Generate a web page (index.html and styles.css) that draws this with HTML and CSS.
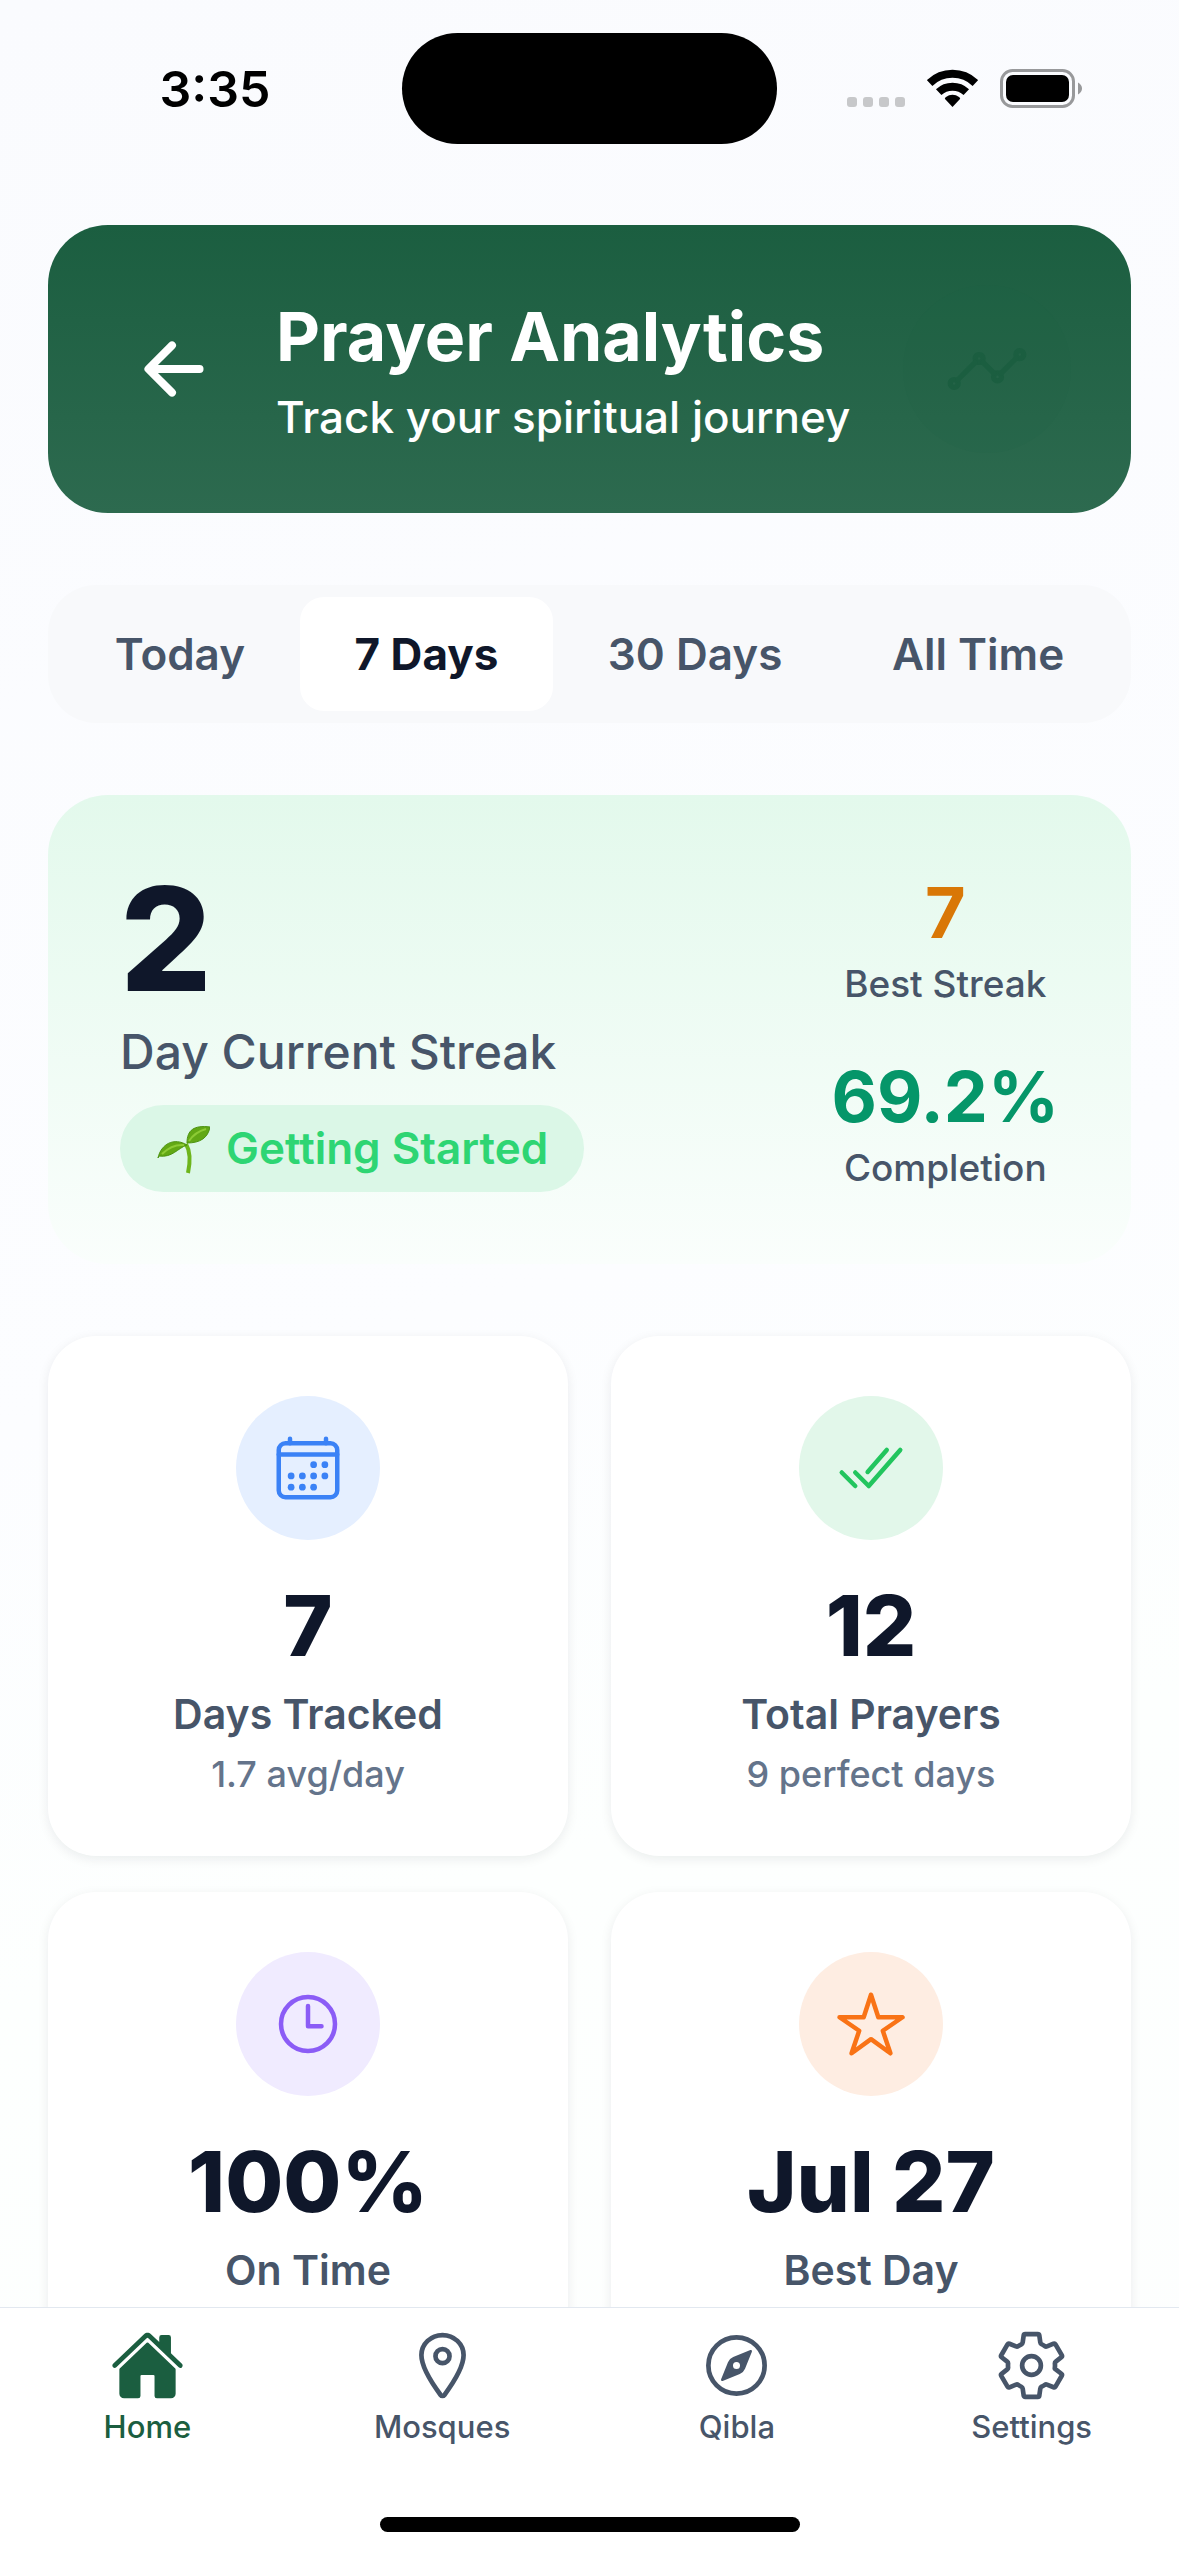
FILE: index.html
```html
<!DOCTYPE html>
<html lang="en">
<head>
  <meta charset="utf-8">
  <meta name="viewport" content="width=device-width, initial-scale=1">
  <title>Prayer Analytics</title>
  <link rel="stylesheet" href="styles.css">
</head>
<body class="app">
  <div class="status-bar">
    <time class="status-time">3:35</time>
    <div class="island"></div>
    <div class="status-icons">
      <svg class="signal" viewBox="0 0 58 39" aria-hidden="true">
        <rect x="0" y="28" width="10" height="10" rx="3"/>
        <rect x="16" y="28" width="10" height="10" rx="3"/>
        <rect x="32" y="28" width="10" height="10" rx="3"/>
        <rect x="48" y="28" width="10" height="10" rx="3"/>
      </svg>
      <svg class="wifi" viewBox="0 0 51 39" aria-hidden="true">
        <path class="wifi-arc" d="M2.6 14A33 33 0 0 1 48.4 14M11.7 23.1A20.3 20.3 0 0 1 39.3 23.1"/>
        <path d="M25.5 38L17.8 29.8Q18 28.8 19 28A11 11 0 0 1 32 28Q33 28.8 33.2 29.8Z"/>
      </svg>
      <svg class="battery" viewBox="0 0 82 39" aria-hidden="true">
        <rect class="battery-shell" x="1.5" y="1.5" width="72" height="36" rx="11"/>
        <rect x="6" y="6" width="63" height="27" rx="7"/>
        <path class="battery-cap" d="M78 13.5Q82 16 82 19.5T78 25.5Z"/>
      </svg>
    </div>
  </div>

  <main class="content">
    <header class="hero">
      <button class="back" type="button" aria-label="Back">
        <svg class="icon icon-lg icon-bold" viewBox="0 0 512 512"><path d="M244 400L100 256l144-144M120 256h292"/></svg>
      </button>
      <div class="hero-text">
        <h1 class="hero-title">Prayer Analytics</h1>
        <p class="hero-subtitle">Track your spiritual journey</p>
      </div>
      <div class="hero-badge">
        <svg class="icon icon-lg" viewBox="0 0 512 512" aria-hidden="true">
          <circle cx="456" cy="168" r="24"/><circle cx="320" cy="304" r="24"/><circle cx="208" cy="192" r="24"/><circle cx="56" cy="344" r="24"/>
          <path d="M344 280l88-88M232 216l64 64M80 320l104-104"/>
        </svg>
      </div>
    </header>

    <div class="tabs">
      <button class="tab" type="button">Today</button>
      <button class="tab tab-active" type="button" aria-pressed="true">7 Days</button>
      <button class="tab" type="button">30 Days</button>
      <button class="tab" type="button">All Time</button>
    </div>

    <section class="streak">
      <div class="streak-main">
        <div class="streak-count">2</div>
        <div class="streak-label">Day Current Streak</div>
        <div class="streak-pill">
          <svg class="seedling" viewBox="0 0 54 50" aria-hidden="true">
            <path class="stem" d="M30 20Q36 30 32 49"/>
            <path class="leaf" d="M2 34C5 20 18 13 31 21C22 24 16 34 3 32Z"/>
            <path class="leaf" d="M31 19C31 6 38 1 54 3C52 14 44 19 31 19Z"/>
            <path class="vein" d="M6 30Q16 20 28 21M33 17Q39 8 50 5"/>
          </svg>
          <span>Getting Started</span>
        </div>
      </div>
      <div class="streak-side">
        <div class="metric">
          <div class="metric-value metric-amber">7</div>
          <div class="metric-label">Best Streak</div>
        </div>
        <div class="metric">
          <div class="metric-value metric-green">69.2%</div>
          <div class="metric-label">Completion</div>
        </div>
      </div>
    </section>

    <section class="stats">
      <article class="card">
        <div class="bubble bubble-blue">
          <svg class="icon" viewBox="0 0 512 512" aria-hidden="true">
            <rect x="48" y="80" width="416" height="384" rx="48"/>
            <path d="M128 48v32M384 48v32M464 160H48"/>
            <g class="solid"><circle cx="296" cy="232" r="24"/><circle cx="376" cy="232" r="24"/><circle cx="296" cy="312" r="24"/><circle cx="376" cy="312" r="24"/><circle cx="136" cy="312" r="24"/><circle cx="216" cy="312" r="24"/><circle cx="136" cy="392" r="24"/><circle cx="216" cy="392" r="24"/><circle cx="296" cy="392" r="24"/></g>
          </svg>
        </div>
        <div class="card-value">7</div>
        <div class="card-label">Days Tracked</div>
        <div class="card-note">1.7 avg/day</div>
      </article>
      <article class="card">
        <div class="bubble bubble-green">
          <svg class="icon" viewBox="0 0 512 512" aria-hidden="true"><path d="M464 128L240 384l-96-96M144 384l-96-96M368 128L232 284"/></svg>
        </div>
        <div class="card-value">12</div>
        <div class="card-label">Total Prayers</div>
        <div class="card-note">9 perfect days</div>
      </article>
      <article class="card">
        <div class="bubble bubble-purple">
          <svg class="icon" viewBox="0 0 512 512" aria-hidden="true"><circle cx="256" cy="256" r="192"/><path d="M256 128v144h96"/></svg>
        </div>
        <div class="card-value">100%</div>
        <div class="card-label">On Time</div>
      </article>
      <article class="card">
        <div class="bubble bubble-orange">
          <svg class="icon" viewBox="0 0 512 512" aria-hidden="true"><path d="M480 208H308L256 48l-52 160H32l140 96-54 160 138-100 138 100-54-160z"/></svg>
        </div>
        <div class="card-value">Jul 27</div>
        <div class="card-label">Best Day</div>
      </article>
    </section>
  </main>

  <footer class="dock">
    <nav class="nav">
      <a class="nav-item nav-active" href="#home" aria-current="page">
        <svg class="icon nav-icon" viewBox="0 0 512 512" aria-hidden="true"><g class="solid"><path d="M261.56 101.28a8 8 0 00-11.06 0L66.4 277.15a8 8 0 00-2.47 5.79L63.9 448a32 32 0 0032 32H192a16 16 0 0016-16V328a8 8 0 018-8h80a8 8 0 018 8v136a16 16 0 0016 16h96.06a32 32 0 0032-32V282.94a8 8 0 00-2.47-5.79z"/><path d="M490.91 244.15l-74.8-71.56V64a16 16 0 00-16-16h-48a16 16 0 00-16 16v32l-57.92-55.38C272.77 35.14 264.71 32 256 32c-8.68 0-16.72 3.14-22.14 8.63l-212.7 203.5c-6.22 6-7 15.87-1.34 22.37A16 16 0 0043 267.56L250.5 69.28a8 8 0 0111.06 0l207.52 198.28a16 16 0 0022.59-.44c6.14-6.36 5.63-16.86-.76-22.97z"/></g></svg>
        <span>Home</span>
      </a>
      <a class="nav-item" href="#mosques">
        <svg class="icon nav-icon" viewBox="0 0 512 512" aria-hidden="true"><path d="M256 48c-79.5 0-144 61.39-144 137 0 87 96 224.87 131.25 272.49a15.77 15.77 0 0025.5 0C304 409.89 400 272.07 400 185c0-75.61-64.5-137-144-137z"/><circle cx="256" cy="192" r="48"/></svg>
        <span>Mosques</span>
      </a>
      <a class="nav-item" href="#qibla">
        <svg class="icon nav-icon" viewBox="0 0 512 512" aria-hidden="true"><circle cx="256" cy="256" r="192"/><path class="solid" d="M350.67 150.93l-117.2 46.88a64 64 0 00-35.66 35.66l-46.88 117.2a8 8 0 0010.4 10.4l117.2-46.88a64 64 0 0035.66-35.66l46.88-117.2a8 8 0 00-10.4-10.4zM256 280a24 24 0 1124-24 24 24 0 01-24 24z"/></svg>
        <span>Qibla</span>
      </a>
      <a class="nav-item" href="#settings">
        <svg class="icon nav-icon" viewBox="0 0 512 512" aria-hidden="true"><circle cx="256" cy="256" r="64"/><path d="M416.39 256a154.34 154.34 0 01-1.53 20.79l45.21 35.46a10.81 10.81 0 012.45 13.75l-42.77 74a10.81 10.81 0 01-13.14 4.59l-44.9-18.08a16.11 16.11 0 00-15.17 1.75A164.48 164.48 0 01325 400.8a15.94 15.94 0 00-8.82 12.14l-6.73 47.89a11.08 11.08 0 01-10.68 9.17h-85.54a11.11 11.11 0 01-10.69-8.87l-6.72-47.82a16.07 16.07 0 00-9-12.22 155.3 155.3 0 01-21.46-12.57 16 16 0 00-15.11-1.71l-44.89 18.07a10.81 10.81 0 01-13.14-4.58l-42.77-74a10.8 10.8 0 012.45-13.75l38.21-30a16.05 16.05 0 006-14.08c-.36-4.17-.58-8.33-.58-12.5s.21-8.27.58-12.35a16 16 0 00-6.07-13.94l-38.19-30A10.81 10.81 0 0149.48 186l42.77-74a10.81 10.81 0 0113.14-4.59l44.9 18.08a16.11 16.11 0 0015.17-1.75A164.48 164.48 0 01187 111.2a15.94 15.94 0 008.82-12.14l6.73-47.89A11.08 11.08 0 01213.23 42h85.54a11.11 11.11 0 0110.69 8.87l6.72 47.82a16.07 16.07 0 009 12.22 155.3 155.3 0 0121.46 12.57 16 16 0 0015.11 1.71l44.89-18.07a10.81 10.81 0 0113.14 4.58l42.77 74a10.8 10.8 0 01-2.45 13.75l-38.21 30a16.05 16.05 0 00-6.05 14.08c.33 4.14.55 8.3.55 12.47z"/></svg>
        <span>Settings</span>
      </a>
    </nav>
    <div class="home-indicator"></div>
  </footer>
</body>
</html>
```
FILE: styles.css
```css
:root {
  --ink: #0f172a;
  --slate: #475569;
  --muted: #64748b;
  --brand: #1b5e40;
}

* {
  box-sizing: border-box;
}

.app {
  display: flex;
  flex-direction: column;
  height: 100vh;
  margin: 0;
  background: linear-gradient(165deg, #fafbfe 0%, #fcfdff 50%, #fdfffe 70%, #fdfefe 100%);
  color: var(--ink);
  font-family: Inter, "Liberation Sans", sans-serif;
}

/* Status bar */

.status-bar {
  display: grid;
  grid-template-columns: 1fr 375px 1fr;
  align-items: center;
  justify-items: center;
  padding: 33px 28px;
}

.status-time {
  color: #000;
  font-size: 50px;
  font-weight: 600;
  line-height: 60px;
}

.island {
  width: 100%;
  height: 111px;
  border-radius: 56px;
  background: #000;
}

.status-icons {
  display: flex;
  gap: 22px;
}

.signal,
.wifi,
.battery {
  height: 39px;
}

.signal {
  width: 58px;
  fill: #c7c8ca;
}

.wifi {
  width: 51px;
}

.wifi-arc {
  fill: none;
  stroke: #000;
  stroke-width: 8;
}

.battery {
  width: 82px;
}

.battery-shell {
  fill: none;
  stroke: #98999b;
  stroke-width: 3;
}

.battery-cap {
  fill: #98999b;
}

/* Icons */

.icon {
  display: block;
  width: 72px;
  height: 72px;
  fill: none;
  stroke: currentColor;
  stroke-width: 32;
  stroke-linecap: round;
  stroke-linejoin: round;
}

.icon-lg {
  width: 84px;
  height: 84px;
}

.icon-bold {
  stroke-width: 48;
}

.icon .solid {
  fill: currentColor;
  stroke: none;
}

/* Scrolling content */

.content {
  display: flex;
  flex: 1;
  flex-direction: column;
  gap: 72px;
  min-height: 0;
  padding: 48px 48px 72px;
  overflow-y: auto;
  scrollbar-width: none;
}

.content > * {
  flex-shrink: 0;
}

.hero {
  display: flex;
  align-items: center;
  gap: 36px;
  padding: 60px;
  border-radius: 60px;
  background: linear-gradient(#1b5e40, #2d6a4f);
  color: #fff;
}

.back {
  display: grid;
  place-items: center;
  width: 132px;
  height: 132px;
  padding: 0;
  border: 0;
  background: none;
  color: inherit;
}

.hero-text {
  display: flex;
  flex: 1;
  flex-direction: column;
  gap: 12px;
}

.hero-title {
  margin: 0;
  font-size: 68px;
  font-weight: 700;
  line-height: 84px;
}

.hero-subtitle {
  margin: 0;
  font-size: 44px;
  font-weight: 500;
  line-height: 54px;
}

.hero-badge {
  display: grid;
  place-items: center;
  width: 168px;
  height: 168px;
  border-radius: 50%;
  background: rgb(27 94 64 / 10%);
  color: var(--brand);
}

.tabs {
  display: flex;
  padding: 12px;
  border-radius: 48px;
  background: #f8f9fb;
}

.tab {
  flex: 1 1 auto;
  height: 114px;
  padding: 0 36px;
  border: 0;
  border-radius: 24px;
  background: none;
  color: var(--slate);
  font: 600 44px/54px Inter, "Liberation Sans", sans-serif;
}

.tab-active {
  background: #fff;
  color: var(--ink);
  font-weight: 700;
}

/* Streak summary */

.streak {
  display: flex;
  align-items: center;
  justify-content: space-between;
  padding: 72px;
  border-radius: 60px;
  background: linear-gradient(#e3f9ec, #fafefc);
}

.streak-main {
  display: flex;
  flex-direction: column;
  align-items: flex-start;
}

.streak-count {
  font-size: 144px;
  font-weight: 800;
  line-height: 144px;
}

.streak-label {
  margin: 12px 0 24px;
  color: var(--slate);
  font-size: 48px;
  font-weight: 500;
  line-height: 58px;
}

.streak-pill {
  display: flex;
  align-items: center;
  gap: 16px;
  padding: 18px 36px;
  border-radius: 48px;
  background: #dbf7e7;
  color: #2ed573;
  font-size: 44px;
  font-weight: 600;
  line-height: 51px;
}

.seedling {
  width: 54px;
  height: 50px;
}

.leaf {
  fill: #62a815;
  stroke: #4c9310;
  stroke-width: 1;
}

.vein {
  fill: none;
  stroke: #8ccb35;
  stroke-width: 2;
}

.stem {
  fill: none;
  stroke: #6db51b;
  stroke-width: 4;
}

.streak-side {
  display: flex;
  flex-direction: column;
  gap: 48px;
  text-align: center;
}

.metric {
  display: flex;
  flex-direction: column;
  gap: 6px;
}

.metric-value {
  font-size: 70px;
  font-weight: 700;
  line-height: 86px;
}

.metric-amber {
  color: #d97706;
}

.metric-green {
  color: #059669;
}

.metric-label {
  color: var(--slate);
  font-size: 37px;
  font-weight: 500;
  line-height: 44px;
}

/* Stat cards */

.stats {
  display: grid;
  grid-template-columns: 1fr 1fr;
  grid-auto-rows: 1fr;
  gap: 36px 43px;
}

.card {
  display: flex;
  flex-direction: column;
  align-items: center;
  gap: 12px;
  padding: 60px;
  border-radius: 48px;
  background: #fff;
  box-shadow: 0 3px 12px rgb(15 23 42 / 8%);
}

.bubble {
  display: grid;
  place-items: center;
  width: 144px;
  height: 144px;
  margin-bottom: 24px;
  border-radius: 50%;
}

.bubble-blue {
  background: #e5efff;
  color: #3b82f6;
}

.bubble-green {
  background: #e2f7ea;
  color: #22c55e;
}

.bubble-purple {
  background: #f0ebff;
  color: #8b5cf6;
}

.bubble-orange {
  background: #feede2;
  color: #f97316;
}

.card-value {
  font-size: 84px;
  font-weight: 800;
  line-height: 100px;
}

.card-label {
  color: var(--slate);
  font-size: 41px;
  font-weight: 600;
  line-height: 52px;
}

.card-note {
  color: var(--muted);
  font-size: 36px;
  font-weight: 500;
  line-height: 44px;
}

/* Bottom navigation */

.dock {
  display: flex;
  flex-direction: column;
  gap: 72px;
  align-items: center;
  padding: 20px 0 24px;
  border-top: 1px solid #e2e8f0;
  background: #fff;
}

.nav {
  display: grid;
  grid-template-columns: repeat(4, 1fr);
  width: 100%;
}

.nav-item {
  display: flex;
  flex-direction: column;
  align-items: center;
  gap: 6px;
  color: var(--slate);
  font-size: 31px;
  font-weight: 500;
  line-height: 36px;
  text-decoration: none;
}

.nav-active {
  color: var(--brand);
}

.nav-icon {
  width: 75px;
  height: 75px;
}

.home-indicator {
  width: 420px;
  height: 15px;
  border-radius: 8px;
  background: #000;
}
```
